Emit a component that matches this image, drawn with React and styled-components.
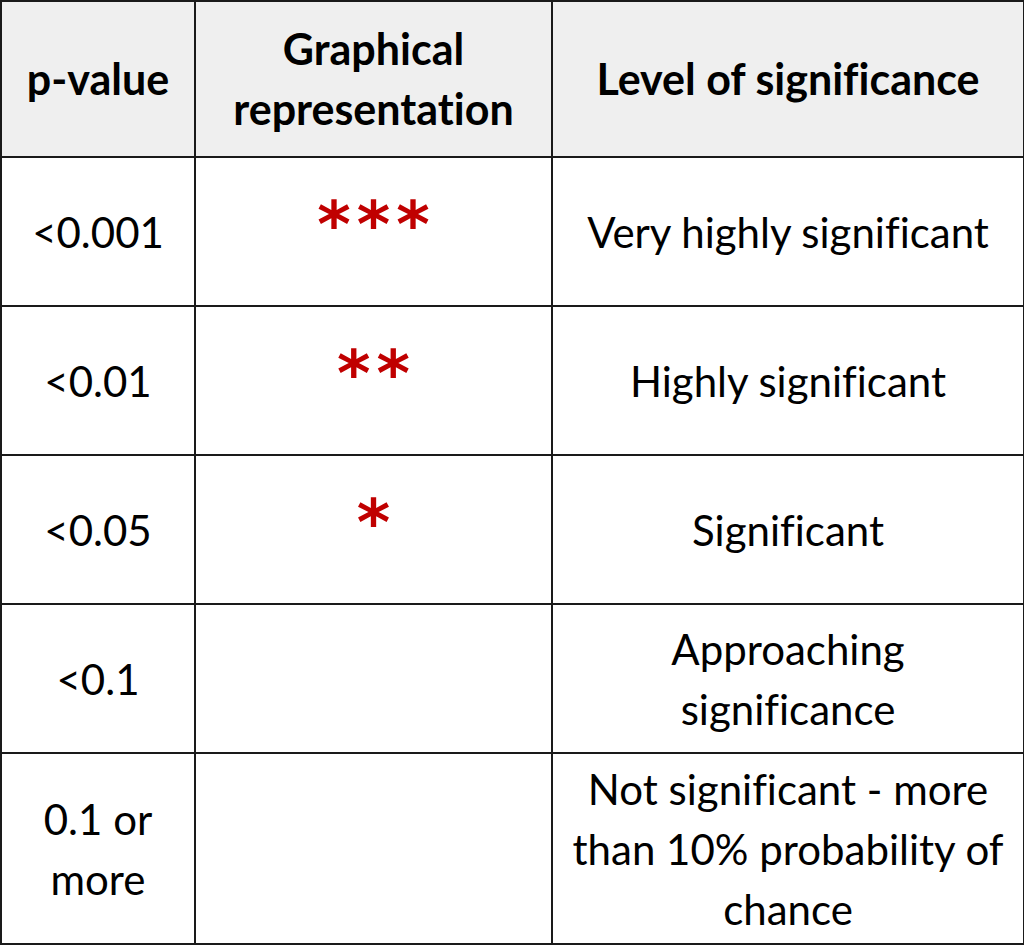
import React from 'react';
import styled, { createGlobalStyle } from 'styled-components';

const GlobalStyle = createGlobalStyle`
  html, body {
    margin: 0;
    padding: 0;
    background: #fff;
  }
`;

const Table = styled.table`
  border-collapse: collapse;
  width: 1023px;
  table-layout: fixed;
  font-family: 'Lato', 'Open Sans', sans-serif;
  font-variant-ligatures: none;
  color: #000;
`;

const HeadCell = styled.th`
  background-color: #efefef;
  border: 2px solid #1a1a1a;
  height: 154px;
  font-size: 43px;
  font-weight: 700;
  line-height: 60px;
  text-align: center;
  padding: 0 4px;
`;

const Cell = styled.td`
  border: 2px solid #1a1a1a;
  height: ${props => props.tall ? '189px' : '147px'};
  font-size: 42px;
  line-height: 60px;
  text-align: center;
  vertical-align: middle;
  padding: 0 4px;
`;

const Stars = styled.span`
  display: inline-block;
  color: #c00000;
  font-family: 'DejaVu Sans', sans-serif;
  font-weight: 700;
  font-size: 64px;
  letter-spacing: 6px;
  padding-left: 6px;
  position: relative;
  top: -4px;
`;

const rows = [
  { p: '<0.001', stars: '***', level: 'Very highly significant' },
  { p: '<0.01', stars: '**', level: 'Highly significant' },
  { p: '<0.05', stars: '*', level: 'Significant' },
  { p: '<0.1', stars: '', level: <>Approaching<br />significance</> },
  { p: <>0.1 or<br />more</>, stars: '', level: <>Not significant - more<br />than 10% probability of<br />chance</>, tall: true },
];

export default function App() {
  return (
    <>
      <GlobalStyle />
      <Table>
        <colgroup>
          <col style={{ width: '194px' }} />
          <col style={{ width: '357px' }} />
          <col style={{ width: '472px' }} />
        </colgroup>
        <thead>
          <tr>
            <HeadCell>p-value</HeadCell>
            <HeadCell>Graphical<br />representation</HeadCell>
            <HeadCell>Level of significance</HeadCell>
          </tr>
        </thead>
        <tbody>
          {rows.map((r, i) => (
            <tr key={i}>
              <Cell tall={r.tall}>{r.p}</Cell>
              <Cell tall={r.tall}>{r.stars && <Stars>{r.stars}</Stars>}</Cell>
              <Cell tall={r.tall}>{r.level}</Cell>
            </tr>
          ))}
        </tbody>
      </Table>
    </>
  );
}
